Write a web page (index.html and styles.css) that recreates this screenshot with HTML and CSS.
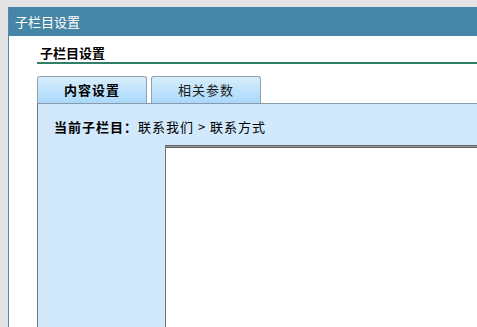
FILE: index.html
```html
<!DOCTYPE html>
<html>
  <head>
    <meta charset="utf-8">
    <link rel="stylesheet" href="styles.css">
  </head>
  <body>
    <div class="panel">
      <div class="panelHead">子栏目设置</div>
      <div class="panelBody">
        <div class="subTitle">子栏目设置</div>
        <div class="tabs">
          <div class="tab active">内容设置</div>
          <div class="tab">相关参数</div>
        </div>
        <div class="tabBox">
          <div class="crumb"><b>当前子栏目：</b>联系我们 &gt; 联系方式</div>
          <div class="editor"></div>
        </div>
      </div>
    </div>
  </body>
</html>
```

FILE: styles.css
```css
html, body{
	height: 100%;
}

body{
	margin: 0;
	padding: 7px 0 0 8px;
	box-sizing: border-box;
	background-color: #e4e4e4;
	font-family: "Noto Sans CJK SC", "DejaVu Sans", sans-serif;
	font-size: 13px;
	overflow: hidden;
}

.panel{
	background-color: #fff;
	border-left: 1px solid #5b87a0;
	height: 100%;
}

.panelHead{
	background-color: #4585a5;
	color: #fff;
	height: 29px;
	line-height: 29px;
	padding-left: 6px;
	font-size: 13px;
}

.panelBody{
	padding: 8px 0 0 28px;
}

.subTitle{
	font-weight: bold;
	height: 18px;
	line-height: 18px;
	padding-left: 3px;
	border-bottom: 2px solid #2f7f68;
	color: #000;
}

.tabs{
	display: flex;
	gap: 4px;
	margin-top: 12px;
	height: 27px;
}

.tab{
	width: 108px;
	height: 26px;
	line-height: 26px;
	text-align: center;
	letter-spacing: 1px;
	border: 1px solid #8ea3b1;
	border-bottom: none;
	border-radius: 3px 3px 0 0;
	background: linear-gradient(#d8eefc, #a9d8fb);
	color: #1a1a1a;
}

.tab.active{
	font-weight: bold;
	color: #000;
}

.tabBox{
	background-color: #d2e9fc;
	border-top: 1px solid #8a9aa6;
	border-left: 1px solid #6e7a82;
	height: 209px;
	padding: 14px 0 0 16px;
}

.crumb{
	height: 18px;
	line-height: 18px;
	letter-spacing: 1px;
	color: #000;
}

.editor{
	margin: 9px 0 0 111px;
	background-color: #fff;
	border-top: 1px solid #5e625e;
	box-shadow: inset 0 1px 0 #9a9e9a, inset 0 2px 0 #5e625e;
	border-left: 1px solid #6c7278;
	height: 181px;
}
```
